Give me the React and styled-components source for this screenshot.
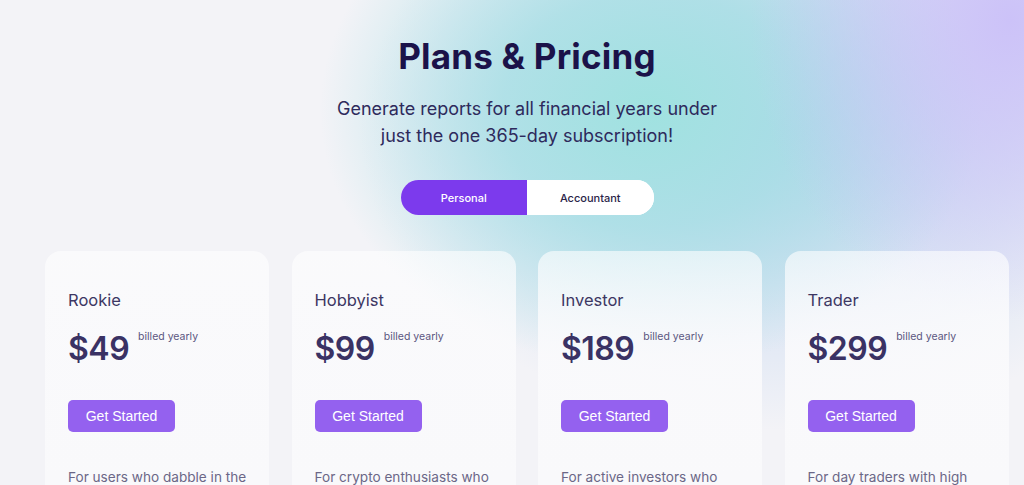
import React, { useState } from "react";
import styled, { createGlobalStyle } from "styled-components";

const GlobalStyle = createGlobalStyle`
	html, body {
		margin: 0;
		padding: 0;
		background: #f3f3f7;
	}
	body {
		font-family: "Inter", "Noto Sans", sans-serif;
		overflow: hidden;
	}
`;

const Page = styled.div`
	width: 1024px;
	height: 485px;
	overflow: hidden;
	box-sizing: border-box;
	padding-top: 34px;
	background:
		radial-gradient(ellipse 260px 300px at 1010px 20px, rgba(204, 194, 248, 1) 0%, rgba(204, 194, 248, 0.6) 45%, rgba(204, 194, 248, 0) 100%),
		radial-gradient(ellipse 330px 260px at 650px 110px, rgba(160, 226, 224, 1) 0%, rgba(165, 223, 228, 0.8) 45%, rgba(170, 220, 230, 0) 100%),
		radial-gradient(ellipse 420px 300px at 780px 130px, rgba(180, 205, 238, 0.9) 0%, rgba(180, 205, 238, 0) 100%),
		#f3f3f7;
`;

const Header = styled.header`
	display: flex;
	flex-direction: column;
	align-items: center;
	text-align: center;
	padding-left: 30px;
`;

const Title = styled.h1`
	margin: 0;
	font-size: 35px;
	font-weight: 700;
	color: #1b1249;
	letter-spacing: 0.2px;
	line-height: 44px;
`;

const Subtitle = styled.p`
	margin: 17px 0 0;
	font-size: 18px;
	line-height: 27px;
	font-weight: 400;
	color: #2e2a5c;
`;

const Toggle = styled.div`
	display: flex;
	margin-top: 31px;
	border-radius: 18px;
	overflow: hidden;
	background: #fff;
`;

const ToggleOption = styled.button`
	width: 126.5px;
	height: 35px;
	border: none;
	padding: 0;
	font-family: "Inter", sans-serif;
	font-size: 11px;
	font-weight: 500;
	cursor: pointer;
	background: ${(props) => (props.active ? "#7c3aed" : "#ffffff")};
	color: ${(props) => (props.active ? "#ffffff" : "#2a2448")};
`;

const Cards = styled.div`
	display: grid;
	grid-template-columns: repeat(4, 224px);
	column-gap: 22.5px;
	padding-left: 45px;
	margin-top: 36px;
`;

const Card = styled.div`
	height: 260px;
	border-radius: 16px;
	padding: 39px 23px 0;
	box-sizing: border-box;
	background: linear-gradient(180deg, rgba(255, 255, 255, 0.6) 0%, rgba(250, 250, 252, 0.92) 40%, rgba(249, 249, 251, 0.98) 100%);
`;

const PlanName = styled.div`
	font-size: 16.5px;
	color: #3d3763;
	line-height: 20px;
`;

const PriceRow = styled.div`
	display: flex;
	align-items: flex-start;
	margin-top: 19px;
`;

const Price = styled.div`
	font-size: 32px;
	font-weight: 600;
	color: #3a3264;
	line-height: 40px;
	letter-spacing: -0.5px;
`;

const Billed = styled.span`
	font-size: 10.5px;
	color: #5b5680;
	margin-left: 9px;
	margin-top: 1px;
`;

const Button = styled.button`
	margin-top: 31px;
	width: 107px;
	height: 32px;
	border: none;
	border-radius: 5px;
	background: #9461ef;
	color: #fff;
	font-family: "Liberation Sans", Arial, sans-serif;
	font-size: 14px;
	cursor: pointer;
`;

const Description = styled.p`
	margin: 35px 0 0;
	font-size: 13.6px;
	line-height: 20px;
	color: #6b6787;
	white-space: nowrap;
`;

const plans = [
	{ name: "Rookie", price: "$49", desc: "For users who dabble in the" },
	{ name: "Hobbyist", price: "$99", desc: "For crypto enthusiasts who" },
	{ name: "Investor", price: "$189", desc: "For active investors who" },
	{ name: "Trader", price: "$299", desc: "For day traders with high" },
];

const App = () => {
	const [mode, setMode] = useState("personal");

	return (
		<Page>
			<GlobalStyle />
			<Header>
				<Title>Plans &amp; Pricing</Title>
				<Subtitle>
					Generate reports for all financial years under
					<br />
					just the one 365-day subscription!
				</Subtitle>
				<Toggle>
					<ToggleOption active={mode === "personal"} onClick={() => setMode("personal")}>
						Personal
					</ToggleOption>
					<ToggleOption active={mode === "accountant"} onClick={() => setMode("accountant")}>
						Accountant
					</ToggleOption>
				</Toggle>
			</Header>
			<Cards>
				{plans.map((p) => (
					<Card key={p.name}>
						<PlanName>{p.name}</PlanName>
						<PriceRow>
							<Price>{p.price}</Price>
							<Billed>billed yearly</Billed>
						</PriceRow>
						<Button>Get Started</Button>
						<Description>{p.desc}</Description>
					</Card>
				))}
			</Cards>
		</Page>
	);
};

export default App;
